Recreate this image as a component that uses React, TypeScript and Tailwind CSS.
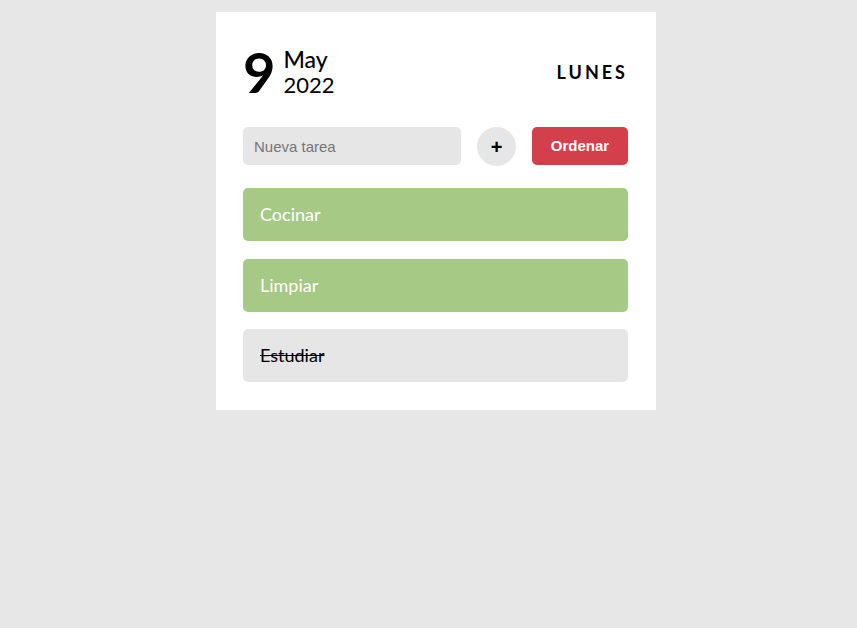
import { useState } from "react";

type Task = { id: number; text: string; done: boolean };

const initialTasks: Task[] = [
  { id: 1, text: "Cocinar", done: false },
  { id: 2, text: "Limpiar", done: false },
  { id: 3, text: "Estudiar", done: true },
];

export default function App() {
  const [tasks] = useState<Task[]>(initialTasks);

  return (
    <div className="min-h-screen w-full bg-[#e7e7e7] pt-3 font-['Lato',sans-serif]">
      <div className="ml-[216px] w-[440px] bg-white pl-[27px] pr-[28px] pt-[32px] pb-[28px]">
        {/* header with date */}
        <header className="flex items-center justify-between">
          <div className="flex items-center gap-[8px]">
            <span className="text-[56px] font-bold leading-none text-black">9</span>
            <div className="flex flex-col text-black">
              <span className="text-[23px] font-medium leading-[26px]">May</span>
              <span className="text-[22px] leading-[26px]">2022</span>
            </div>
          </div>
          <span className="text-[18px] font-bold tracking-[3px] text-black">LUNES</span>
        </header>

        <div className="mt-[27px] flex items-start">
          <input
            type="text"
            placeholder="Nueva tarea"
            className="h-[38px] w-[218px] rounded-[5px] bg-[#e6e6e6] px-[11px] font-['Liberation_Sans',Arial,sans-serif] text-[15px] text-black outline-none placeholder:text-[#757575]"
          />
          <button className="ml-4 flex h-[39px] w-[39px] items-center justify-center rounded-full bg-[#e6e6e6] font-['Liberation_Sans',Arial,sans-serif] text-[20px] font-bold leading-none text-black">
            +
          </button>
          <button className="ml-auto h-[38px] w-[96px] rounded-[5px] bg-[#d33f4a] font-['Liberation_Sans',Arial,sans-serif] text-[15px] font-bold text-white">
            Ordenar
          </button>
        </div>

        <ul className="mt-[22px] flex flex-col gap-[17.5px]">
          {tasks.map((t) => (
            <li
              key={t.id}
              className={
                t.done
                  ? "flex h-[53px] items-center rounded-[5px] bg-[#e6e6e6] px-[17px] text-[18px] text-black line-through"
                  : "flex h-[53px] items-center rounded-[5px] bg-[#a6c985] px-[17px] text-[18px] text-white"
              }
            >
              {t.text}
            </li>
          ))}
        </ul>
      </div>
    </div>
  );
}
